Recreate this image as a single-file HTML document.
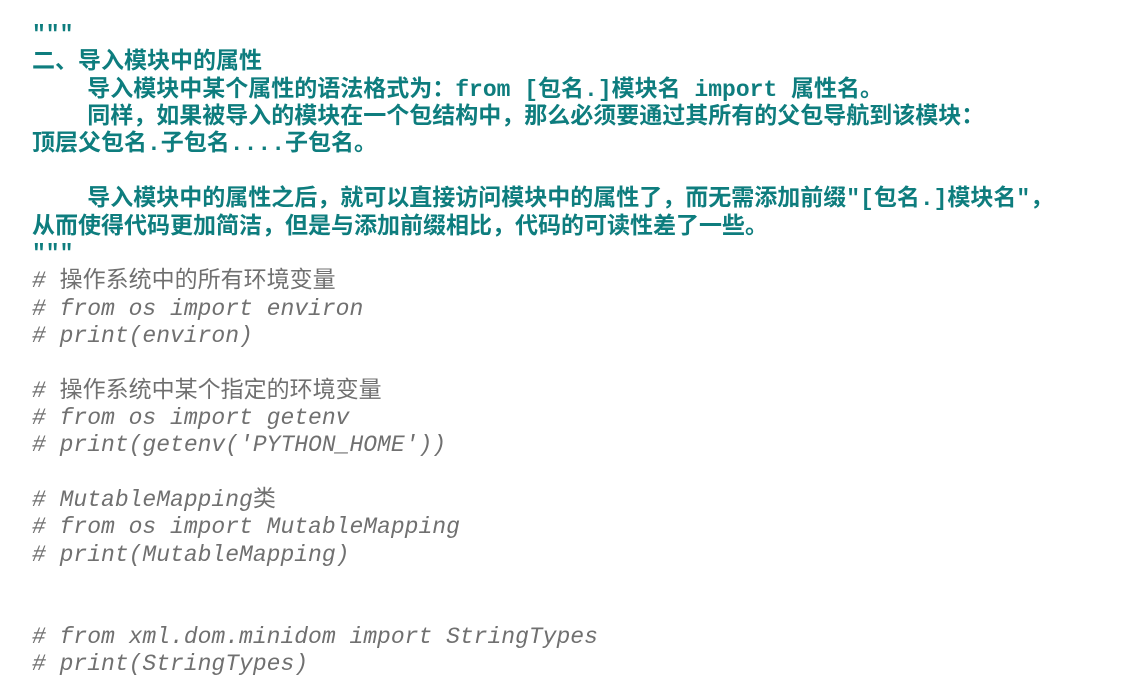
<!DOCTYPE html>
<html><head><meta charset="utf-8"><style>
html,body{margin:0;padding:0;background:#fff;width:1140px;height:695px;overflow:hidden}
pre{margin:0;position:absolute;left:32px;top:22px;font-family:"Liberation Mono","Noto Sans CJK SC",monospace;font-size:23px;line-height:27.36px;white-space:pre}
.d{color:#0e7d7e;font-weight:bold}
.c{color:#707070;font-style:italic}
.n{font-style:normal}
</style></head><body>
<pre><span class="d">"""
二、导入模块中的属性
    导入模块中某个属性的语法格式为：from [包名.]模块名 import 属性名。
    同样，如果被导入的模块在一个包结构中，那么必须要通过其所有的父包导航到该模块：
顶层父包名.子包名....子包名。

    导入模块中的属性之后，就可以直接访问模块中的属性了，而无需添加前缀"[包名.]模块名"，
从而使得代码更加简洁，但是与添加前缀相比，代码的可读性差了一些。
"""</span>
<span class="c"># <span class="n">操作系统中的所有环境变量</span>
# from os import environ
# print(environ)

# <span class="n">操作系统中某个指定的环境变量</span>
# from os import getenv
# print(getenv('PYTHON_HOME'))

# MutableMapping<span class="n">类</span>
# from os import MutableMapping
# print(MutableMapping)


# from xml.dom.minidom import StringTypes
# print(StringTypes)</span></pre>
</body></html>
